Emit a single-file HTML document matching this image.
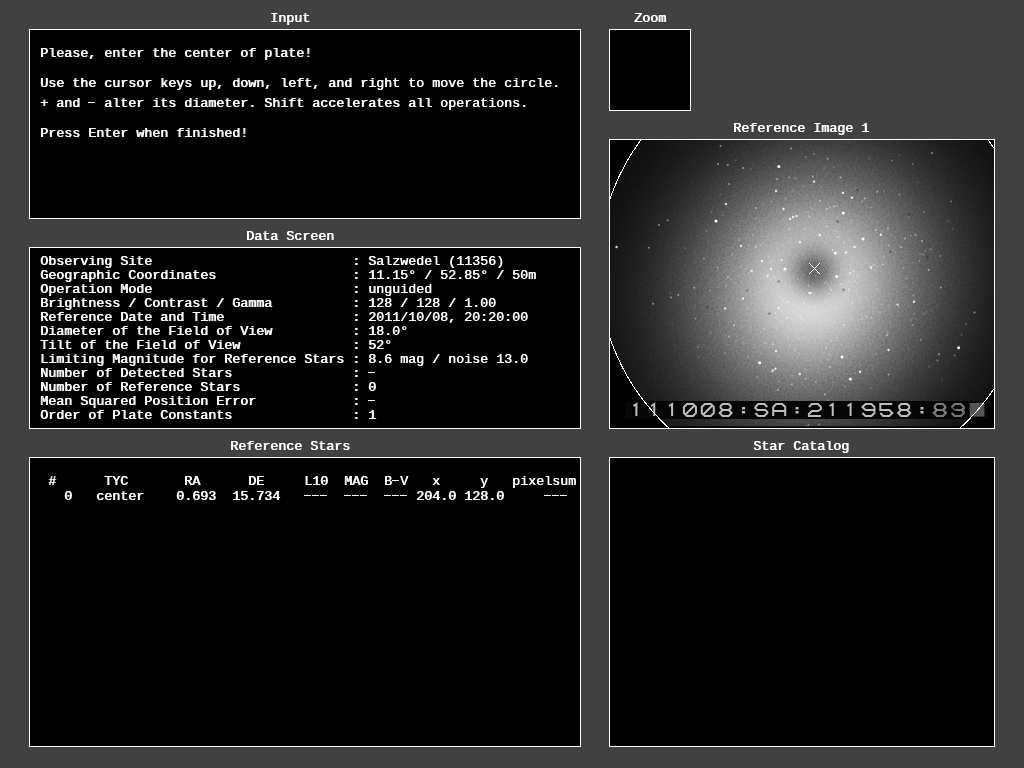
<!DOCTYPE html>
<html><head><meta charset="utf-8">
<style>
html,body{margin:0;padding:0;}
body{width:1024px;height:768px;background:#414141;position:relative;overflow:hidden;
font-family:"Liberation Mono",monospace;font-weight:normal;font-size:13.3333px;color:#fff;}
.d{color:transparent;text-shadow:none;background:linear-gradient(#fff,#fff) no-repeat 0 var(--dy,6px)/7px 1px;}
.p{position:absolute;background:#000;border:1px solid #fff;box-sizing:border-box;}
.t{position:absolute;white-space:pre;line-height:14px;filter:grayscale(1);text-shadow:0.7px 0 0 #fff;}
</style></head><body>
<div class="t" style="left:270px;top:12px">Input</div>
<div class="t" style="left:634px;top:12px">Zoom</div>
<div class="t" style="left:733px;top:122px">Reference Image 1</div>
<div class="t" style="left:246px;top:230px">Data Screen</div>
<div class="t" style="left:230px;top:440px">Reference Stars</div>
<div class="t" style="left:753px;top:440px">Star Catalog</div>

<div class="p" style="left:29px;top:29px;width:552px;height:190px"></div>
<div class="p" style="left:609px;top:29px;width:82px;height:82px"></div>
<div class="p" style="left:609px;top:139px;width:386px;height:290px;overflow:hidden"><svg width="384" height="288" viewBox="0 0 384 288" style="display:block">
<defs>
<radialGradient id="g" cx="0" cy="0" r="2.4" gradientUnits="userSpaceOnUse" gradientTransform="translate(201.93 147.14) rotate(33.46) scale(112.05 121.15)"><stop offset="0.0000" stop-color="rgb(237,237,237)"/><stop offset="0.0417" stop-color="rgb(233,233,233)"/><stop offset="0.0833" stop-color="rgb(224,224,224)"/><stop offset="0.1250" stop-color="rgb(211,211,211)"/><stop offset="0.1667" stop-color="rgb(195,195,195)"/><stop offset="0.2083" stop-color="rgb(178,178,178)"/><stop offset="0.2500" stop-color="rgb(160,160,160)"/><stop offset="0.2917" stop-color="rgb(141,141,141)"/><stop offset="0.3333" stop-color="rgb(123,123,123)"/><stop offset="0.3750" stop-color="rgb(106,106,106)"/><stop offset="0.4167" stop-color="rgb(91,91,91)"/><stop offset="0.4792" stop-color="rgb(70,70,70)"/><stop offset="0.5417" stop-color="rgb(53,53,53)"/><stop offset="0.6042" stop-color="rgb(40,40,40)"/><stop offset="0.6667" stop-color="rgb(29,29,29)"/><stop offset="0.7500" stop-color="rgb(20,20,20)"/><stop offset="0.8333" stop-color="rgb(14,14,14)"/><stop offset="1.0000" stop-color="rgb(8,8,8)"/></radialGradient>
<radialGradient id="d" cx="203.7" cy="131.8" r="64" gradientUnits="userSpaceOnUse"><stop offset="0.0000" stop-color="#000" stop-opacity="0.560"/><stop offset="0.0781" stop-color="#000" stop-opacity="0.536"/><stop offset="0.1562" stop-color="#000" stop-opacity="0.471"/><stop offset="0.2344" stop-color="#000" stop-opacity="0.380"/><stop offset="0.3125" stop-color="#000" stop-opacity="0.281"/><stop offset="0.3906" stop-color="#000" stop-opacity="0.191"/><stop offset="0.4688" stop-color="#000" stop-opacity="0.119"/><stop offset="0.5469" stop-color="#000" stop-opacity="0.068"/><stop offset="0.6250" stop-color="#000" stop-opacity="0.036"/><stop offset="0.7500" stop-color="#000" stop-opacity="0.011"/><stop offset="0.8750" stop-color="#000" stop-opacity="0.003"/><stop offset="1.0000" stop-color="#000" stop-opacity="0.000"/></radialGradient>
<filter id="bl" x="-5%" y="-5%" width="110%" height="110%"><feGaussianBlur stdDeviation="0.55"/></filter>
<filter id="nz" x="0" y="0" width="100%" height="100%" color-interpolation-filters="sRGB"><feTurbulence type="fractalNoise" baseFrequency="0.45" numOctaves="2" seed="5"/><feColorMatrix type="matrix" values="0.33 0.33 0.33 0 0  0.33 0.33 0.33 0 0  0.33 0.33 0.33 0 0  0 0 0 0 1"/></filter>
<clipPath id="c"><circle cx="204.5" cy="128.5" r="216"/></clipPath>
</defs>
<rect width="384" height="288" fill="#000"/>
<g clip-path="url(#c)">
<rect width="384" height="288" fill="url(#g)"/>
<rect width="384" height="288" fill="url(#d)"/>
<rect width="384" height="288" filter="url(#nz)" style="mix-blend-mode:overlay" opacity="0.3"/>
<g filter="url(#bl)"><circle cx="168.8" cy="26.6" r="1.5" fill="#fff"/><circle cx="106.0" cy="81.0" r="1.5" fill="#fff"/><circle cx="6.6" cy="107.0" r="1.2" fill="#fff" fill-opacity="0.8"/><circle cx="38.8" cy="107.8" r="1" fill="#fff" fill-opacity="0.45"/><circle cx="57.6" cy="80.3" r="1" fill="#fff" fill-opacity="0.45"/><circle cx="49.0" cy="85.0" r="1" fill="#fff" fill-opacity="0.45"/><circle cx="116.0" cy="64.0" r="1.2" fill="#fff" fill-opacity="0.8"/><circle cx="166.0" cy="51.0" r="1.2" fill="#fff" fill-opacity="0.8"/><circle cx="167.0" cy="39.0" r="1" fill="#fff" fill-opacity="0.45"/><circle cx="173.4" cy="69.0" r="1.2" fill="#fff" fill-opacity="0.8"/><circle cx="180.0" cy="79.0" r="1.2" fill="#fff" fill-opacity="0.8"/><circle cx="183.0" cy="77.0" r="1.2" fill="#fff" fill-opacity="0.8"/><circle cx="186.6" cy="76.0" r="1.2" fill="#fff" fill-opacity="0.8"/><circle cx="146.0" cy="68.0" r="1" fill="#fff" fill-opacity="0.45"/><circle cx="110.6" cy="6.0" r="1" fill="#fff" fill-opacity="0.45"/><circle cx="117.8" cy="25.0" r="1" fill="#fff" fill-opacity="0.45"/><circle cx="108.0" cy="24.0" r="1" fill="#fff" fill-opacity="0.45"/><circle cx="131.0" cy="106.0" r="1.2" fill="#fff" fill-opacity="0.8"/><circle cx="152.0" cy="121.0" r="1.2" fill="#fff" fill-opacity="0.8"/><circle cx="175.0" cy="129.0" r="1.5" fill="#fff"/><circle cx="161.0" cy="129.0" r="1.2" fill="#fff" fill-opacity="0.8"/><circle cx="141.6" cy="131.0" r="1.2" fill="#fff" fill-opacity="0.8"/><circle cx="157.5" cy="136.0" r="1.2" fill="#fff" fill-opacity="0.8"/><circle cx="118.0" cy="137.0" r="1" fill="#fff" fill-opacity="0.45"/><circle cx="190.0" cy="102.0" r="1.2" fill="#fff" fill-opacity="0.8"/><circle cx="146.0" cy="107.0" r="1" fill="#fff" fill-opacity="0.45"/><circle cx="171.6" cy="120.0" r="1" fill="#fff" fill-opacity="0.45"/><circle cx="168.8" cy="141.6" r="1.4" fill="#000" fill-opacity="0.28"/><circle cx="119.0" cy="44.0" r="1" fill="#fff" fill-opacity="0.45"/><circle cx="133.0" cy="28.0" r="1" fill="#fff" fill-opacity="0.45"/><circle cx="181.0" cy="8.4" r="1" fill="#fff" fill-opacity="0.45"/><circle cx="233.3" cy="73.0" r="1.5" fill="#fff"/><circle cx="253.0" cy="99.0" r="1.5" fill="#fff"/><circle cx="225.4" cy="113.0" r="1.5" fill="#fff"/><circle cx="236.0" cy="112.5" r="1.2" fill="#fff" fill-opacity="0.8"/><circle cx="244.5" cy="107.0" r="1.2" fill="#fff" fill-opacity="0.8"/><circle cx="270.8" cy="94.7" r="1.2" fill="#fff" fill-opacity="0.8"/><circle cx="266.0" cy="90.0" r="1" fill="#fff" fill-opacity="0.45"/><circle cx="242.0" cy="57.8" r="1.2" fill="#fff" fill-opacity="0.8"/><circle cx="233.0" cy="52.9" r="1.2" fill="#fff" fill-opacity="0.8"/><circle cx="254.8" cy="58.5" r="1" fill="#fff" fill-opacity="0.45"/><circle cx="230.4" cy="37.5" r="1" fill="#fff" fill-opacity="0.45"/><circle cx="204.0" cy="41.6" r="1.2" fill="#fff" fill-opacity="0.8"/><circle cx="209.8" cy="95.0" r="1.2" fill="#fff" fill-opacity="0.8"/><circle cx="199.5" cy="77.0" r="1" fill="#fff" fill-opacity="0.45"/><circle cx="217.0" cy="69.0" r="1" fill="#fff" fill-opacity="0.45"/><circle cx="220.0" cy="67.5" r="1" fill="#fff" fill-opacity="0.45"/><circle cx="224.0" cy="66.6" r="1" fill="#fff" fill-opacity="0.45"/><circle cx="226.7" cy="136.5" r="1.5" fill="#fff"/><circle cx="261.0" cy="127.5" r="1.2" fill="#fff" fill-opacity="0.8"/><circle cx="240.0" cy="133.0" r="1" fill="#fff" fill-opacity="0.45"/><circle cx="295.0" cy="98.4" r="1" fill="#fff" fill-opacity="0.45"/><circle cx="312.0" cy="101.0" r="1" fill="#fff" fill-opacity="0.45"/><circle cx="322.0" cy="13.0" r="1" fill="#fff" fill-opacity="0.45"/><circle cx="318.6" cy="130.0" r="1" fill="#fff" fill-opacity="0.45"/><circle cx="305.4" cy="94.7" r="1" fill="#fff" fill-opacity="0.45"/><circle cx="291.0" cy="107.0" r="1" fill="#fff" fill-opacity="0.45"/><circle cx="217.7" cy="18.8" r="1" fill="#fff" fill-opacity="0.45"/><circle cx="210.0" cy="61.0" r="1" fill="#fff" fill-opacity="0.45"/><circle cx="203.0" cy="36.6" r="1" fill="#fff" fill-opacity="0.45"/><circle cx="298.9" cy="74.4" r="1.4" fill="#000" fill-opacity="0.28"/><circle cx="247.3" cy="49.7" r="1.4" fill="#000" fill-opacity="0.28"/><circle cx="317.6" cy="117.0" r="1.4" fill="#000" fill-opacity="0.28"/><circle cx="227.6" cy="81.6" r="1.4" fill="#000" fill-opacity="0.28"/><circle cx="149.6" cy="222.8" r="1.5" fill="#fff"/><circle cx="115.3" cy="168.4" r="1.2" fill="#fff" fill-opacity="0.8"/><circle cx="133.0" cy="158.6" r="1.2" fill="#fff" fill-opacity="0.8"/><circle cx="168.8" cy="168.0" r="1.2" fill="#fff" fill-opacity="0.8"/><circle cx="166.0" cy="211.0" r="1.2" fill="#fff" fill-opacity="0.8"/><circle cx="162.8" cy="230.6" r="1.2" fill="#fff" fill-opacity="0.8"/><circle cx="165.4" cy="228.8" r="1.2" fill="#fff" fill-opacity="0.8"/><circle cx="119.0" cy="196.5" r="1" fill="#fff" fill-opacity="0.45"/><circle cx="189.8" cy="234.0" r="1.2" fill="#fff" fill-opacity="0.8"/><circle cx="167.8" cy="250.0" r="1" fill="#fff" fill-opacity="0.45"/><circle cx="177.0" cy="177.8" r="1" fill="#fff" fill-opacity="0.45"/><circle cx="123.8" cy="185.6" r="1" fill="#fff" fill-opacity="0.45"/><circle cx="84.4" cy="147.8" r="1" fill="#fff" fill-opacity="0.45"/><circle cx="68.4" cy="155.0" r="1" fill="#fff" fill-opacity="0.45"/><circle cx="61.0" cy="157.5" r="1" fill="#fff" fill-opacity="0.45"/><circle cx="43.0" cy="163.7" r="1" fill="#fff" fill-opacity="0.45"/><circle cx="162.8" cy="204.0" r="1" fill="#fff" fill-opacity="0.45"/><circle cx="178.0" cy="161.8" r="1" fill="#fff" fill-opacity="0.45"/><circle cx="181.9" cy="244.3" r="1" fill="#fff" fill-opacity="0.45"/><circle cx="136.9" cy="150.6" r="1.4" fill="#000" fill-opacity="0.28"/><circle cx="97.5" cy="167.4" r="1.4" fill="#000" fill-opacity="0.28"/><circle cx="159.4" cy="173.6" r="1.4" fill="#000" fill-opacity="0.28"/><circle cx="348.6" cy="207.8" r="1.5" fill="#fff"/><circle cx="232.0" cy="217.0" r="1.5" fill="#fff"/><circle cx="240.4" cy="239.0" r="1.5" fill="#fff"/><circle cx="304.0" cy="161.8" r="1.2" fill="#fff" fill-opacity="0.8"/><circle cx="287.6" cy="164.6" r="1.2" fill="#fff" fill-opacity="0.8"/><circle cx="278.6" cy="210.0" r="1.2" fill="#fff" fill-opacity="0.8"/><circle cx="250.0" cy="231.8" r="1.2" fill="#fff" fill-opacity="0.8"/><circle cx="220.0" cy="227.0" r="1" fill="#fff" fill-opacity="0.45"/><circle cx="199.5" cy="153.0" r="1.2" fill="#fff" fill-opacity="0.8"/><circle cx="278.6" cy="234.4" r="1" fill="#fff" fill-opacity="0.45"/><circle cx="195.8" cy="238.7" r="1" fill="#fff" fill-opacity="0.45"/><circle cx="330.8" cy="147.4" r="1" fill="#fff" fill-opacity="0.45"/><circle cx="364.5" cy="172.5" r="1" fill="#fff" fill-opacity="0.45"/><circle cx="329.0" cy="214.3" r="1" fill="#fff" fill-opacity="0.45"/><circle cx="234.0" cy="185.0" r="1" fill="#fff" fill-opacity="0.45"/><circle cx="256.7" cy="176.8" r="1" fill="#fff" fill-opacity="0.45"/><circle cx="277.0" cy="195.0" r="1" fill="#fff" fill-opacity="0.45"/><circle cx="214.9" cy="254.6" r="1" fill="#fff" fill-opacity="0.45"/><circle cx="240.1" cy="133.0" r="1" fill="#fff" fill-opacity="0.45"/><circle cx="243.4" cy="131.6" r="1" fill="#fff" fill-opacity="0.45"/><circle cx="263.6" cy="125.0" r="1" fill="#fff" fill-opacity="0.45"/><circle cx="200.4" cy="153.1" r="1.2" fill="#fff" fill-opacity="0.8"/><circle cx="231.6" cy="144.0" r="1" fill="#fff" fill-opacity="0.45"/><circle cx="221.2" cy="149.9" r="1" fill="#fff" fill-opacity="0.45"/><circle cx="238.8" cy="149.2" r="1" fill="#fff" fill-opacity="0.45"/><circle cx="216.7" cy="86.0" r="1" fill="#fff" fill-opacity="0.45"/><circle cx="227.7" cy="97.1" r="1" fill="#fff" fill-opacity="0.45"/><circle cx="171.7" cy="120.0" r="1" fill="#fff" fill-opacity="0.45"/><circle cx="222.5" cy="110.0" r="1" fill="#fff" fill-opacity="0.45"/><circle cx="277.9" cy="88.7" r="1" fill="#fff" fill-opacity="0.45"/><circle cx="273.3" cy="124.5" r="1" fill="#fff" fill-opacity="0.45"/><circle cx="280.5" cy="112.0" r="1.4" fill="#000" fill-opacity="0.28"/><circle cx="233.6" cy="150.0" r="1.4" fill="#000" fill-opacity="0.28"/><circle cx="178.8" cy="146.3" r="0.9" fill="#fff" fill-opacity="0.17"/><circle cx="310.9" cy="199.7" r="0.9" fill="#fff" fill-opacity="0.37"/><circle cx="191.9" cy="190.8" r="0.9" fill="#fff" fill-opacity="0.19"/><circle cx="271.8" cy="90.8" r="0.9" fill="#fff" fill-opacity="0.19"/><circle cx="298.9" cy="77.7" r="0.9" fill="#fff" fill-opacity="0.20"/><circle cx="161.6" cy="61.3" r="0.9" fill="#fff" fill-opacity="0.36"/><circle cx="126.3" cy="85.3" r="0.9" fill="#fff" fill-opacity="0.14"/><circle cx="314.0" cy="71.9" r="0.9" fill="#fff" fill-opacity="0.30"/><circle cx="316.3" cy="171.8" r="0.9" fill="#fff" fill-opacity="0.16"/><circle cx="265.4" cy="168.3" r="0.9" fill="#fff" fill-opacity="0.13"/><circle cx="185.2" cy="210.4" r="0.9" fill="#fff" fill-opacity="0.37"/><circle cx="220.0" cy="180.0" r="0.9" fill="#fff" fill-opacity="0.27"/><circle cx="169.2" cy="241.5" r="0.9" fill="#fff" fill-opacity="0.31"/><circle cx="236.0" cy="265.1" r="0.9" fill="#fff" fill-opacity="0.12"/><circle cx="115.6" cy="195.3" r="0.9" fill="#fff" fill-opacity="0.16"/><circle cx="223.9" cy="91.1" r="0.9" fill="#fff" fill-opacity="0.24"/><circle cx="173.0" cy="79.2" r="0.9" fill="#fff" fill-opacity="0.22"/><circle cx="240.3" cy="142.2" r="0.9" fill="#fff" fill-opacity="0.33"/><circle cx="272.1" cy="164.3" r="0.9" fill="#fff" fill-opacity="0.32"/><circle cx="171.4" cy="181.4" r="0.9" fill="#fff" fill-opacity="0.32"/><circle cx="182.5" cy="51.5" r="0.9" fill="#fff" fill-opacity="0.24"/><circle cx="274.2" cy="51.6" r="0.9" fill="#fff" fill-opacity="0.21"/><circle cx="267.8" cy="149.9" r="0.9" fill="#fff" fill-opacity="0.31"/><circle cx="178.1" cy="187.6" r="0.9" fill="#fff" fill-opacity="0.30"/><circle cx="211.3" cy="221.3" r="0.9" fill="#fff" fill-opacity="0.13"/><circle cx="216.1" cy="141.4" r="0.9" fill="#fff" fill-opacity="0.14"/><circle cx="196.0" cy="72.2" r="0.9" fill="#fff" fill-opacity="0.25"/><circle cx="167.7" cy="108.2" r="0.9" fill="#fff" fill-opacity="0.25"/><circle cx="234.9" cy="246.7" r="0.9" fill="#fff" fill-opacity="0.31"/><circle cx="193.1" cy="197.5" r="0.9" fill="#fff" fill-opacity="0.14"/><circle cx="197.7" cy="163.8" r="0.9" fill="#fff" fill-opacity="0.17"/><circle cx="165.2" cy="173.1" r="0.9" fill="#fff" fill-opacity="0.30"/><circle cx="283.9" cy="116.7" r="0.9" fill="#fff" fill-opacity="0.16"/><circle cx="241.7" cy="116.5" r="0.9" fill="#fff" fill-opacity="0.25"/><circle cx="218.7" cy="153.5" r="0.9" fill="#fff" fill-opacity="0.37"/><circle cx="283.7" cy="73.9" r="0.9" fill="#fff" fill-opacity="0.13"/><circle cx="75.1" cy="108.2" r="0.9" fill="#fff" fill-opacity="0.18"/><circle cx="245.0" cy="233.1" r="0.9" fill="#fff" fill-opacity="0.27"/><circle cx="190.3" cy="176.0" r="0.9" fill="#fff" fill-opacity="0.36"/><circle cx="161.6" cy="151.7" r="0.9" fill="#fff" fill-opacity="0.21"/><circle cx="344.7" cy="215.5" r="0.9" fill="#fff" fill-opacity="0.37"/><circle cx="313.6" cy="173.8" r="0.9" fill="#fff" fill-opacity="0.28"/><circle cx="175.0" cy="58.7" r="0.9" fill="#fff" fill-opacity="0.25"/><circle cx="301.2" cy="180.0" r="0.9" fill="#fff" fill-opacity="0.19"/><circle cx="263.1" cy="162.7" r="0.9" fill="#fff" fill-opacity="0.28"/><circle cx="289.3" cy="54.7" r="0.9" fill="#fff" fill-opacity="0.36"/><circle cx="211.4" cy="181.8" r="0.9" fill="#fff" fill-opacity="0.24"/><circle cx="186.2" cy="197.4" r="0.9" fill="#fff" fill-opacity="0.31"/><circle cx="266.5" cy="81.5" r="0.9" fill="#fff" fill-opacity="0.21"/><circle cx="278.8" cy="105.5" r="0.9" fill="#fff" fill-opacity="0.30"/><circle cx="138.9" cy="105.3" r="0.9" fill="#fff" fill-opacity="0.22"/><circle cx="338.3" cy="81.1" r="0.9" fill="#fff" fill-opacity="0.25"/><circle cx="250.1" cy="231.6" r="0.9" fill="#fff" fill-opacity="0.26"/><circle cx="302.6" cy="24.2" r="0.9" fill="#fff" fill-opacity="0.30"/><circle cx="200.3" cy="220.2" r="0.9" fill="#fff" fill-opacity="0.20"/><circle cx="245.9" cy="150.9" r="0.9" fill="#fff" fill-opacity="0.32"/><circle cx="161.9" cy="121.1" r="0.9" fill="#fff" fill-opacity="0.31"/><circle cx="224.3" cy="261.9" r="0.9" fill="#fff" fill-opacity="0.15"/><circle cx="275.4" cy="171.3" r="0.9" fill="#fff" fill-opacity="0.17"/><circle cx="147.8" cy="151.9" r="0.9" fill="#fff" fill-opacity="0.19"/><circle cx="160.1" cy="264.0" r="0.9" fill="#fff" fill-opacity="0.33"/><circle cx="179.4" cy="206.0" r="0.9" fill="#fff" fill-opacity="0.29"/><circle cx="144.4" cy="155.5" r="0.9" fill="#fff" fill-opacity="0.20"/><circle cx="150.6" cy="192.0" r="0.9" fill="#fff" fill-opacity="0.17"/><circle cx="216.1" cy="208.5" r="0.9" fill="#fff" fill-opacity="0.33"/><circle cx="260.2" cy="204.0" r="0.9" fill="#fff" fill-opacity="0.22"/><circle cx="321.4" cy="170.7" r="0.9" fill="#fff" fill-opacity="0.18"/><circle cx="315.3" cy="111.2" r="0.9" fill="#fff" fill-opacity="0.22"/><circle cx="131.4" cy="187.4" r="0.9" fill="#fff" fill-opacity="0.21"/><circle cx="240.8" cy="57.0" r="0.9" fill="#fff" fill-opacity="0.18"/><circle cx="221.4" cy="200.8" r="0.9" fill="#fff" fill-opacity="0.35"/><circle cx="138.7" cy="133.4" r="0.9" fill="#fff" fill-opacity="0.36"/><circle cx="215.3" cy="161.4" r="0.9" fill="#fff" fill-opacity="0.35"/><circle cx="218.1" cy="95.6" r="0.9" fill="#fff" fill-opacity="0.13"/><circle cx="230.4" cy="135.3" r="0.9" fill="#fff" fill-opacity="0.28"/><circle cx="193.0" cy="114.3" r="0.9" fill="#fff" fill-opacity="0.29"/><circle cx="202.1" cy="68.9" r="0.9" fill="#fff" fill-opacity="0.22"/><circle cx="161.8" cy="231.9" r="0.9" fill="#fff" fill-opacity="0.31"/><circle cx="217.7" cy="260.2" r="0.9" fill="#fff" fill-opacity="0.32"/><circle cx="313.1" cy="114.4" r="0.9" fill="#fff" fill-opacity="0.27"/><circle cx="118.0" cy="204.6" r="0.9" fill="#fff" fill-opacity="0.17"/><circle cx="226.5" cy="66.0" r="0.9" fill="#fff" fill-opacity="0.35"/><circle cx="202.9" cy="152.9" r="0.9" fill="#fff" fill-opacity="0.27"/><circle cx="198.4" cy="145.6" r="0.9" fill="#fff" fill-opacity="0.29"/><circle cx="199.9" cy="274.0" r="0.9" fill="#fff" fill-opacity="0.31"/><circle cx="219.9" cy="251.4" r="0.9" fill="#fff" fill-opacity="0.16"/><circle cx="208.6" cy="228.0" r="0.9" fill="#fff" fill-opacity="0.16"/><circle cx="238.5" cy="151.3" r="0.9" fill="#fff" fill-opacity="0.27"/><circle cx="319.1" cy="226.6" r="0.9" fill="#fff" fill-opacity="0.22"/><circle cx="114.5" cy="122.2" r="0.9" fill="#fff" fill-opacity="0.13"/><circle cx="211.0" cy="47.2" r="0.9" fill="#fff" fill-opacity="0.17"/><circle cx="179.6" cy="88.9" r="0.9" fill="#fff" fill-opacity="0.37"/><circle cx="260.8" cy="248.5" r="0.9" fill="#fff" fill-opacity="0.22"/><circle cx="274.6" cy="77.4" r="0.9" fill="#fff" fill-opacity="0.16"/><circle cx="277.8" cy="261.2" r="0.9" fill="#fff" fill-opacity="0.20"/><circle cx="273.7" cy="116.7" r="0.9" fill="#fff" fill-opacity="0.34"/><circle cx="242.1" cy="163.0" r="0.9" fill="#fff" fill-opacity="0.36"/><circle cx="126.0" cy="143.2" r="0.9" fill="#fff" fill-opacity="0.16"/><circle cx="154.5" cy="136.9" r="0.9" fill="#fff" fill-opacity="0.29"/><circle cx="269.3" cy="159.3" r="0.9" fill="#fff" fill-opacity="0.13"/><circle cx="150.3" cy="104.9" r="0.9" fill="#fff" fill-opacity="0.22"/><circle cx="180.1" cy="93.8" r="0.9" fill="#fff" fill-opacity="0.13"/><circle cx="100.6" cy="192.4" r="0.9" fill="#fff" fill-opacity="0.24"/><circle cx="240.9" cy="178.8" r="0.9" fill="#fff" fill-opacity="0.22"/><circle cx="146.6" cy="262.0" r="0.9" fill="#fff" fill-opacity="0.15"/><circle cx="194.7" cy="88.9" r="0.9" fill="#fff" fill-opacity="0.36"/><circle cx="261.2" cy="67.6" r="0.9" fill="#fff" fill-opacity="0.26"/><circle cx="249.7" cy="157.9" r="0.9" fill="#fff" fill-opacity="0.26"/><circle cx="238.7" cy="141.3" r="0.9" fill="#fff" fill-opacity="0.21"/><circle cx="296.5" cy="138.4" r="0.9" fill="#fff" fill-opacity="0.34"/><circle cx="194.9" cy="229.4" r="0.9" fill="#fff" fill-opacity="0.30"/><circle cx="257.0" cy="66.5" r="0.9" fill="#fff" fill-opacity="0.12"/><circle cx="280.8" cy="286.2" r="0.9" fill="#fff" fill-opacity="0.20"/><circle cx="307.3" cy="42.3" r="0.9" fill="#fff" fill-opacity="0.15"/><circle cx="140.5" cy="74.8" r="0.9" fill="#fff" fill-opacity="0.14"/><circle cx="342.8" cy="89.1" r="0.9" fill="#fff" fill-opacity="0.17"/><circle cx="309.9" cy="114.0" r="0.9" fill="#fff" fill-opacity="0.26"/><circle cx="252.2" cy="179.4" r="0.9" fill="#fff" fill-opacity="0.35"/><circle cx="320.1" cy="208.8" r="0.9" fill="#fff" fill-opacity="0.13"/><circle cx="137.8" cy="217.0" r="0.9" fill="#fff" fill-opacity="0.25"/><circle cx="154.5" cy="203.1" r="0.9" fill="#fff" fill-opacity="0.35"/><circle cx="209.8" cy="195.9" r="0.9" fill="#fff" fill-opacity="0.15"/><circle cx="156.8" cy="203.3" r="0.9" fill="#fff" fill-opacity="0.19"/><circle cx="193.9" cy="163.5" r="0.9" fill="#fff" fill-opacity="0.33"/><circle cx="264.9" cy="130.5" r="0.9" fill="#fff" fill-opacity="0.22"/><circle cx="219.9" cy="148.4" r="0.9" fill="#fff" fill-opacity="0.28"/><circle cx="171.6" cy="170.9" r="0.9" fill="#fff" fill-opacity="0.35"/><circle cx="196.5" cy="286.2" r="0.9" fill="#fff" fill-opacity="0.34"/><circle cx="140.5" cy="28.9" r="0.9" fill="#fff" fill-opacity="0.21"/><circle cx="332.1" cy="240.2" r="0.9" fill="#fff" fill-opacity="0.17"/><circle cx="121.1" cy="181.4" r="0.9" fill="#fff" fill-opacity="0.27"/><circle cx="266.8" cy="52.0" r="0.9" fill="#fff" fill-opacity="0.29"/><circle cx="179.1" cy="37.2" r="0.9" fill="#fff" fill-opacity="0.36"/><circle cx="234.2" cy="103.0" r="0.9" fill="#fff" fill-opacity="0.37"/><circle cx="265.6" cy="212.0" r="0.9" fill="#fff" fill-opacity="0.20"/><circle cx="133.0" cy="202.6" r="0.9" fill="#fff" fill-opacity="0.26"/><circle cx="230.9" cy="129.1" r="0.9" fill="#fff" fill-opacity="0.22"/><circle cx="94.0" cy="118.5" r="0.9" fill="#fff" fill-opacity="0.34"/><circle cx="277.7" cy="192.7" r="0.9" fill="#fff" fill-opacity="0.34"/><circle cx="180.2" cy="104.2" r="0.9" fill="#fff" fill-opacity="0.20"/><circle cx="154.1" cy="188.9" r="0.9" fill="#fff" fill-opacity="0.37"/><circle cx="151.5" cy="213.6" r="0.9" fill="#fff" fill-opacity="0.16"/><circle cx="249.2" cy="179.4" r="0.9" fill="#fff" fill-opacity="0.18"/><circle cx="115.8" cy="146.1" r="0.9" fill="#fff" fill-opacity="0.26"/><circle cx="173.4" cy="160.7" r="0.9" fill="#fff" fill-opacity="0.33"/><circle cx="60.1" cy="152.9" r="0.9" fill="#fff" fill-opacity="0.15"/><circle cx="218.1" cy="144.3" r="0.9" fill="#fff" fill-opacity="0.22"/><circle cx="114.9" cy="212.9" r="0.9" fill="#fff" fill-opacity="0.21"/><circle cx="164.8" cy="137.3" r="0.9" fill="#fff" fill-opacity="0.23"/><circle cx="153.5" cy="64.1" r="0.9" fill="#fff" fill-opacity="0.21"/><circle cx="120.7" cy="139.4" r="0.9" fill="#fff" fill-opacity="0.31"/><circle cx="226.3" cy="90.8" r="0.9" fill="#fff" fill-opacity="0.25"/><circle cx="289.5" cy="15.3" r="0.9" fill="#fff" fill-opacity="0.18"/><circle cx="330.3" cy="115.9" r="0.9" fill="#fff" fill-opacity="0.29"/><circle cx="302.7" cy="185.0" r="0.9" fill="#fff" fill-opacity="0.31"/><circle cx="356.1" cy="183.9" r="0.9" fill="#fff" fill-opacity="0.35"/><circle cx="289.0" cy="167.0" r="0.9" fill="#fff" fill-opacity="0.30"/><circle cx="169.2" cy="216.4" r="0.9" fill="#fff" fill-opacity="0.23"/><circle cx="282.1" cy="20.6" r="0.9" fill="#fff" fill-opacity="0.33"/><circle cx="255.8" cy="157.9" r="0.9" fill="#fff" fill-opacity="0.15"/><circle cx="206.0" cy="241.7" r="0.9" fill="#fff" fill-opacity="0.34"/><circle cx="189.6" cy="198.6" r="0.9" fill="#fff" fill-opacity="0.31"/><circle cx="225.0" cy="58.2" r="0.9" fill="#fff" fill-opacity="0.16"/><circle cx="137.6" cy="168.1" r="0.9" fill="#fff" fill-opacity="0.37"/><circle cx="126.0" cy="200.9" r="0.9" fill="#fff" fill-opacity="0.19"/><circle cx="280.5" cy="165.6" r="0.9" fill="#fff" fill-opacity="0.14"/><circle cx="166.2" cy="177.9" r="0.9" fill="#fff" fill-opacity="0.36"/><circle cx="88.8" cy="216.9" r="0.9" fill="#fff" fill-opacity="0.20"/><circle cx="218.1" cy="158.8" r="0.9" fill="#fff" fill-opacity="0.16"/><circle cx="101.7" cy="71.8" r="0.9" fill="#fff" fill-opacity="0.25"/><circle cx="194.2" cy="163.0" r="0.9" fill="#fff" fill-opacity="0.18"/><circle cx="160.2" cy="139.9" r="0.9" fill="#fff" fill-opacity="0.24"/><circle cx="226.8" cy="197.5" r="0.9" fill="#fff" fill-opacity="0.27"/><circle cx="199.6" cy="167.1" r="0.9" fill="#fff" fill-opacity="0.32"/><circle cx="128.8" cy="99.9" r="0.9" fill="#fff" fill-opacity="0.31"/><circle cx="300.9" cy="95.9" r="0.9" fill="#fff" fill-opacity="0.28"/><circle cx="99.9" cy="150.6" r="0.9" fill="#fff" fill-opacity="0.34"/><circle cx="303.5" cy="155.5" r="0.9" fill="#fff" fill-opacity="0.31"/><circle cx="182.7" cy="235.7" r="0.9" fill="#fff" fill-opacity="0.24"/><circle cx="218.0" cy="219.5" r="0.9" fill="#fff" fill-opacity="0.36"/><circle cx="193.5" cy="46.2" r="0.9" fill="#fff" fill-opacity="0.26"/><circle cx="191.7" cy="188.0" r="0.9" fill="#fff" fill-opacity="0.17"/><circle cx="181.6" cy="179.7" r="0.9" fill="#fff" fill-opacity="0.21"/><circle cx="207.4" cy="132.6" r="0.9" fill="#fff" fill-opacity="0.35"/><circle cx="214.8" cy="143.2" r="0.9" fill="#fff" fill-opacity="0.25"/><circle cx="107.6" cy="127.5" r="0.9" fill="#fff" fill-opacity="0.32"/><circle cx="188.1" cy="138.9" r="0.9" fill="#fff" fill-opacity="0.33"/><circle cx="193.2" cy="98.6" r="0.9" fill="#fff" fill-opacity="0.17"/><circle cx="245.4" cy="141.7" r="0.9" fill="#fff" fill-opacity="0.21"/><circle cx="266.7" cy="148.6" r="0.9" fill="#fff" fill-opacity="0.19"/><circle cx="205.6" cy="136.2" r="0.9" fill="#fff" fill-opacity="0.18"/><circle cx="125.8" cy="20.2" r="0.9" fill="#fff" fill-opacity="0.21"/><circle cx="159.1" cy="117.1" r="0.9" fill="#fff" fill-opacity="0.24"/><circle cx="271.1" cy="131.5" r="0.9" fill="#fff" fill-opacity="0.15"/><circle cx="266.7" cy="126.0" r="0.9" fill="#fff" fill-opacity="0.23"/><circle cx="220.1" cy="214.3" r="0.9" fill="#fff" fill-opacity="0.28"/><circle cx="261.6" cy="177.3" r="0.9" fill="#fff" fill-opacity="0.30"/><circle cx="195.4" cy="118.2" r="0.9" fill="#fff" fill-opacity="0.34"/><circle cx="172.2" cy="105.3" r="0.9" fill="#fff" fill-opacity="0.23"/><circle cx="167.1" cy="188.2" r="0.9" fill="#fff" fill-opacity="0.31"/><circle cx="209.0" cy="284.3" r="0.9" fill="#fff" fill-opacity="0.32"/><circle cx="309.5" cy="121.0" r="0.9" fill="#fff" fill-opacity="0.27"/><circle cx="146.0" cy="78.8" r="0.9" fill="#fff" fill-opacity="0.25"/><circle cx="85.5" cy="178.5" r="0.9" fill="#fff" fill-opacity="0.36"/><circle cx="131.0" cy="126.7" r="0.9" fill="#fff" fill-opacity="0.33"/><circle cx="351.5" cy="195.0" r="0.9" fill="#fff" fill-opacity="0.21"/><circle cx="87.8" cy="206.9" r="0.9" fill="#fff" fill-opacity="0.29"/><circle cx="223.9" cy="27.4" r="0.9" fill="#fff" fill-opacity="0.21"/><circle cx="267.6" cy="50.8" r="0.9" fill="#fff" fill-opacity="0.29"/><circle cx="267.1" cy="92.9" r="0.9" fill="#fff" fill-opacity="0.19"/><circle cx="215.6" cy="102.5" r="0.9" fill="#fff" fill-opacity="0.18"/><circle cx="112.2" cy="75.2" r="0.9" fill="#fff" fill-opacity="0.20"/><circle cx="227.3" cy="77.4" r="0.9" fill="#fff" fill-opacity="0.33"/><circle cx="180.1" cy="147.4" r="0.9" fill="#fff" fill-opacity="0.34"/><circle cx="265.9" cy="144.1" r="0.9" fill="#fff" fill-opacity="0.22"/><circle cx="193.6" cy="135.0" r="0.9" fill="#fff" fill-opacity="0.25"/><circle cx="305.8" cy="178.7" r="0.9" fill="#fff" fill-opacity="0.17"/><circle cx="265.6" cy="214.4" r="0.9" fill="#fff" fill-opacity="0.22"/><circle cx="198.5" cy="285.2" r="0.9" fill="#fff" fill-opacity="0.37"/><circle cx="227.3" cy="167.7" r="0.9" fill="#fff" fill-opacity="0.24"/><circle cx="171.6" cy="156.5" r="0.9" fill="#fff" fill-opacity="0.26"/><circle cx="252.2" cy="61.7" r="0.9" fill="#fff" fill-opacity="0.31"/><circle cx="147.0" cy="237.2" r="0.9" fill="#fff" fill-opacity="0.30"/><circle cx="259.0" cy="19.0" r="0.9" fill="#fff" fill-opacity="0.18"/><circle cx="203.9" cy="14.0" r="0.9" fill="#fff" fill-opacity="0.37"/><circle cx="142.6" cy="95.0" r="0.9" fill="#fff" fill-opacity="0.27"/><circle cx="231.0" cy="263.9" r="0.9" fill="#fff" fill-opacity="0.15"/><circle cx="110.1" cy="55.0" r="0.9" fill="#fff" fill-opacity="0.17"/><circle cx="245.9" cy="48.4" r="0.9" fill="#fff" fill-opacity="0.25"/><circle cx="195.1" cy="111.7" r="0.9" fill="#fff" fill-opacity="0.13"/><circle cx="236.2" cy="55.7" r="0.9" fill="#fff" fill-opacity="0.12"/><circle cx="208.1" cy="270.7" r="0.9" fill="#fff" fill-opacity="0.22"/><circle cx="268.6" cy="266.3" r="0.9" fill="#fff" fill-opacity="0.22"/><circle cx="327.5" cy="220.5" r="0.9" fill="#fff" fill-opacity="0.36"/><circle cx="241.4" cy="80.6" r="0.9" fill="#fff" fill-opacity="0.27"/><circle cx="122.0" cy="114.5" r="0.9" fill="#fff" fill-opacity="0.31"/><circle cx="177.8" cy="197.4" r="0.9" fill="#fff" fill-opacity="0.32"/><circle cx="259.0" cy="278.8" r="0.9" fill="#fff" fill-opacity="0.14"/><circle cx="243.0" cy="134.9" r="0.9" fill="#fff" fill-opacity="0.24"/><circle cx="196.0" cy="16.9" r="0.9" fill="#fff" fill-opacity="0.27"/><circle cx="185.8" cy="114.6" r="0.9" fill="#fff" fill-opacity="0.21"/><circle cx="293.2" cy="128.0" r="0.9" fill="#fff" fill-opacity="0.21"/><circle cx="341.1" cy="61.4" r="0.9" fill="#fff" fill-opacity="0.34"/><circle cx="185.4" cy="38.1" r="0.9" fill="#fff" fill-opacity="0.34"/><circle cx="279.4" cy="133.5" r="0.9" fill="#fff" fill-opacity="0.14"/><circle cx="247.5" cy="105.0" r="0.9" fill="#fff" fill-opacity="0.16"/><circle cx="269.8" cy="172.2" r="0.9" fill="#fff" fill-opacity="0.31"/><circle cx="156.2" cy="186.7" r="0.9" fill="#fff" fill-opacity="0.22"/><circle cx="140.6" cy="186.4" r="0.9" fill="#fff" fill-opacity="0.21"/><circle cx="96.5" cy="90.8" r="0.9" fill="#fff" fill-opacity="0.32"/><circle cx="135.5" cy="136.3" r="0.9" fill="#fff" fill-opacity="0.19"/><circle cx="125.2" cy="55.2" r="0.9" fill="#fff" fill-opacity="0.14"/><circle cx="304.2" cy="173.7" r="0.9" fill="#fff" fill-opacity="0.23"/><circle cx="229.9" cy="92.0" r="0.9" fill="#fff" fill-opacity="0.23"/><circle cx="214.0" cy="28.0" r="0.9" fill="#fff" fill-opacity="0.22"/><circle cx="248.0" cy="136.2" r="0.9" fill="#fff" fill-opacity="0.29"/><circle cx="168.6" cy="134.0" r="0.9" fill="#fff" fill-opacity="0.19"/><circle cx="256.1" cy="119.0" r="0.9" fill="#fff" fill-opacity="0.17"/><circle cx="204.6" cy="167.5" r="0.9" fill="#fff" fill-opacity="0.37"/><circle cx="320.8" cy="109.4" r="0.9" fill="#fff" fill-opacity="0.33"/></g>
</g>
<rect x="0" y="286.3" width="384" height="1.7" fill="#000"/>
<rect x="15" y="261" width="363" height="18" fill="#060606"/>
<path transform="translate(19.40,263)" d="M4 3L7 1V13" fill="none" stroke="#bdbdbd" stroke-width="2"/><path transform="translate(37.25,263)" d="M4 3L7 1V13" fill="none" stroke="#bdbdbd" stroke-width="2"/><path transform="translate(55.10,263)" d="M4 3L7 1V13" fill="none" stroke="#bdbdbd" stroke-width="2"/><path transform="translate(72.95,263)" d="M4 1H10L13 4V10L10 13H4L1 10V4ZM11 3L3 11" fill="none" stroke="#bdbdbd" stroke-width="2"/><path transform="translate(90.80,263)" d="M4 1H10L13 4V10L10 13H4L1 10V4ZM11 3L3 11" fill="none" stroke="#bdbdbd" stroke-width="2"/><path transform="translate(108.65,263)" d="M4 1H10L12 3V5L10 7H4L2 5V3ZM4 7H10L13 10L10 13H4L1 10Z" fill="none" stroke="#bdbdbd" stroke-width="2"/><rect x="132.00" y="267" width="3" height="2.5" fill="#bdbdbd"/><rect x="132.00" y="271" width="3" height="2.5" fill="#bdbdbd"/><path transform="translate(144.35,263)" d="M13 4L10 1H4L1 4V5L3 7H11L13 9V10L10 13H4L1 10" fill="none" stroke="#bdbdbd" stroke-width="2"/><path transform="translate(162.20,263)" d="M1 13V4L4 1H10L13 4V13M1 8H13" fill="none" stroke="#bdbdbd" stroke-width="2"/><rect x="185.55" y="267" width="3" height="2.5" fill="#bdbdbd"/><rect x="185.55" y="271" width="3" height="2.5" fill="#bdbdbd"/><path transform="translate(197.90,263)" d="M1 4L4 1H10L13 4V6L10 8H4L1 11V13H13" fill="none" stroke="#bdbdbd" stroke-width="2"/><path transform="translate(215.75,263)" d="M4 3L7 1V13" fill="none" stroke="#bdbdbd" stroke-width="2"/><path transform="translate(233.60,263)" d="M4 3L7 1V13" fill="none" stroke="#bdbdbd" stroke-width="2"/><path transform="translate(251.45,263)" d="M13 7H4L1 4L4 1H10L13 4V10L10 13H4L1 10" fill="none" stroke="#bdbdbd" stroke-width="2"/><path transform="translate(269.30,263)" d="M13 1H1V7H10L13 10L10 13H4L1 10" fill="none" stroke="#bdbdbd" stroke-width="2"/><path transform="translate(287.15,263)" d="M4 1H10L12 3V5L10 7H4L2 5V3ZM4 7H10L13 10L10 13H4L1 10Z" fill="none" stroke="#bdbdbd" stroke-width="2"/><rect x="310.50" y="267" width="3" height="2.5" fill="#bdbdbd"/><rect x="310.50" y="271" width="3" height="2.5" fill="#bdbdbd"/><path transform="translate(322.85,263)" d="M4 1H10L12 3V5L10 7H4L2 5V3ZM4 7H10L13 10L10 13H4L1 10Z" fill="none" stroke="#8c8c8c" stroke-width="2"/><path transform="translate(340.70,263)" d="M1 4L4 1H10L13 4V5L11 7L13 9V10L10 13H4L1 10M5 7H11" fill="none" stroke="#8c8c8c" stroke-width="2"/><path transform="translate(322.85,263)" d="M1 4L4 1H10L13 4V5L11 7L13 9V10L10 13H4L1 10M5 7H11" fill="none" stroke="#6a6a6a" stroke-width="1.6" opacity="0.8"/><path transform="translate(340.70,263)" d="M13 7H4L1 4L4 1H10L13 4V10L10 13H4L1 10" fill="none" stroke="#6a6a6a" stroke-width="1.6" opacity="0.8"/>
<rect x="359.7" y="263" width="14.7" height="13.6" fill="#555"/>
<circle cx="204.5" cy="128.5" r="216" fill="none" stroke="#fff" stroke-width="1" shape-rendering="crispEdges"/>
<path d="M199 123L210 134M210 123L199 134" stroke="#fff" stroke-width="1" shape-rendering="crispEdges"/>
</svg></div>
<div class="p" style="left:29px;top:247px;width:552px;height:182px"></div>
<div class="p" style="left:29px;top:457px;width:552px;height:290px"></div>
<div class="p" style="left:609px;top:457px;width:386px;height:290px"></div>

<div class="t" style="left:40px;top:47px">Please, enter the center of plate!</div>
<div class="t" style="left:40px;top:77px">Use the cursor keys up, down, left, and right to move the circle.</div>
<div class="t" style="left:40px;top:97px">+ and <span class="d">-</span> alter its diameter. Shift accelerates all operations.</div>
<div class="t" style="left:40px;top:127px">Press Enter when finished!</div>

<div class="t" style="left:40px;top:255px">Observing Site                         : Salzwedel (11356)
Geographic Coordinates                 : 11.15° / 52.85° / 50m
Operation Mode                         : unguided
Brightness / Contrast / Gamma          : 128 / 128 / 1.00
Reference Date and Time                : 2011/10/08, 20:20:00
Diameter of the Field of View          : 18.0°
Tilt of the Field of View              : 52°
Limiting Magnitude for Reference Stars : 8.6 mag / noise 13.0
Number of Detected Stars               : <span class="d">-</span>
Number of Reference Stars              : 0
Mean Squared Position Error            : <span class="d">-</span>
Order of Plate Constants               : 1</div>

<div class="t" style="left:40px;top:474px;line-height:15px"> #      TYC       RA      DE     L10  MAG  B<span class="d">-</span>V   x     y   pixelsum
   0   center    0.693  15.734   <span class="d">-</span><span class="d">-</span><span class="d">-</span>  <span class="d">-</span><span class="d">-</span><span class="d">-</span>  <span class="d">-</span><span class="d">-</span><span class="d">-</span> 204.0 128.0     <span class="d">-</span><span class="d">-</span><span class="d">-</span></div>
</body></html>
